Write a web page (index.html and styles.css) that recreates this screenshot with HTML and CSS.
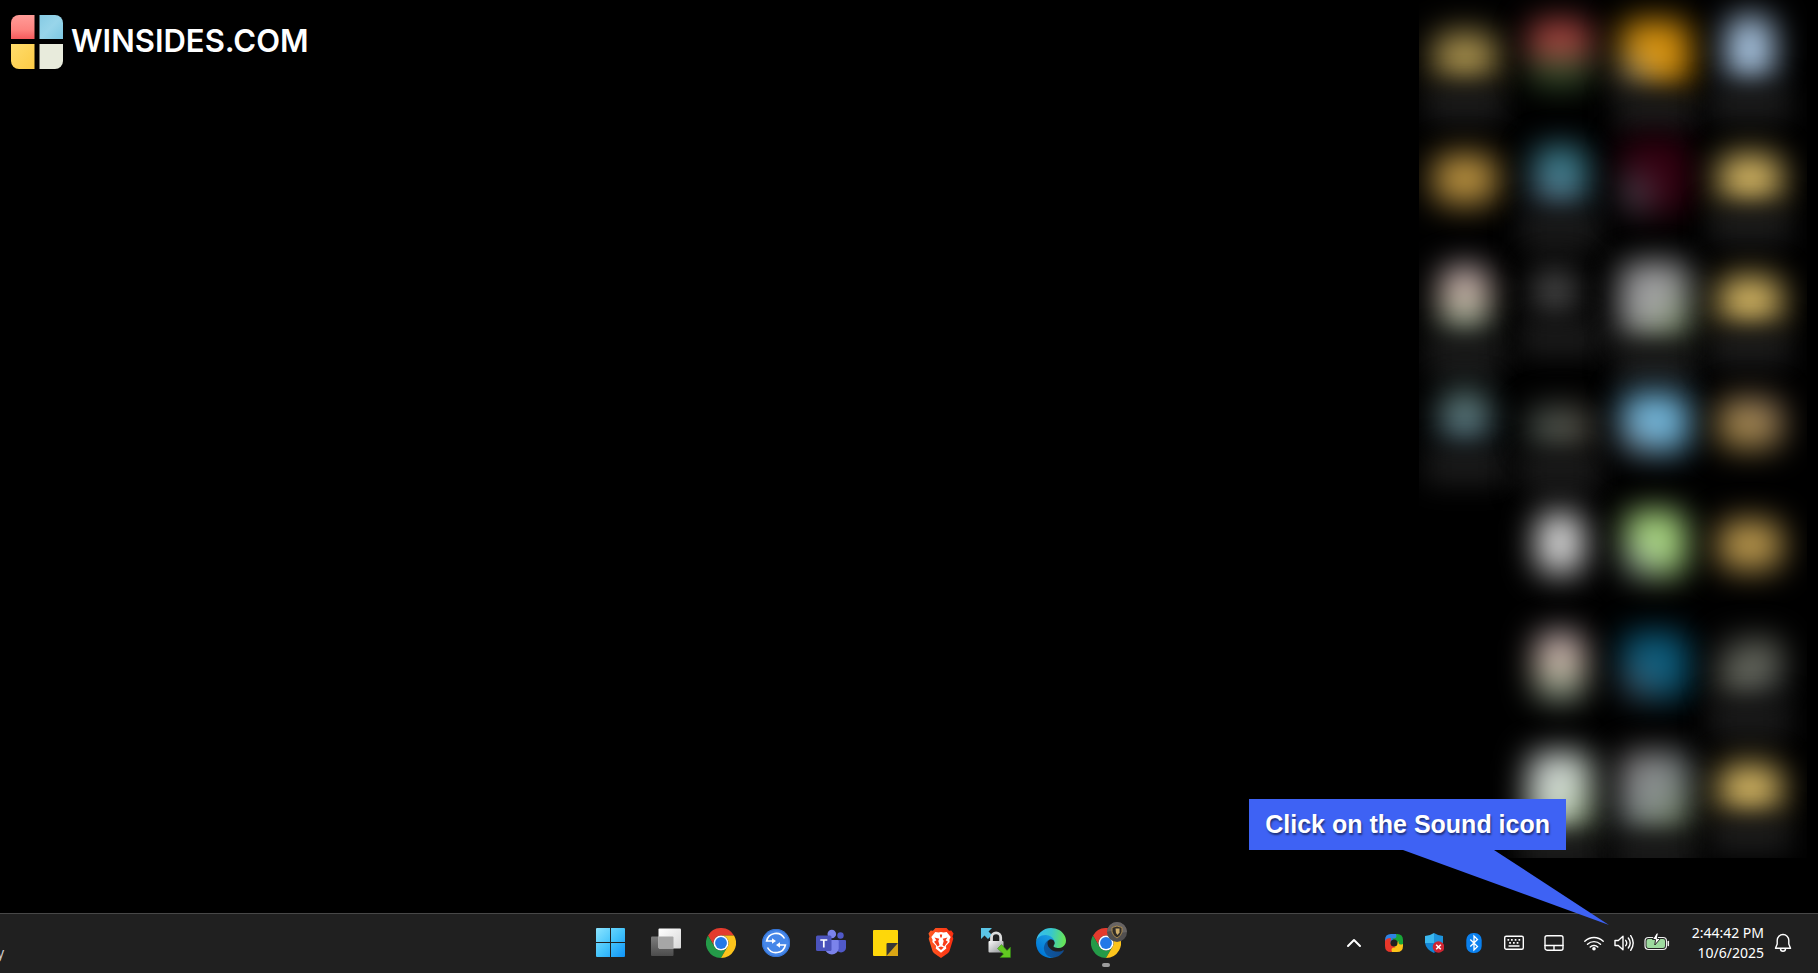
FILE: index.html
```html
<!DOCTYPE html>
<html lang="en">
<head>
<meta charset="utf-8">
<meta name="viewport" content="width=device-width, initial-scale=1">
<title>Winsides.com</title>
<link rel="stylesheet" href="styles.css">
</head>
<body>
<main class="desktop">
  <div class="brand">
    <svg class="brand-mark" viewBox="0 0 52 54" aria-hidden="true">
      <defs>
        <linearGradient id="lr" x1="0" y1="0" x2="0" y2="1"><stop offset="0" stop-color="#ff9c98"/><stop offset=".6" stop-color="#fd8480"/><stop offset="1" stop-color="#f65a5c"/></linearGradient>
        <linearGradient id="lb" x1="0" y1="0" x2="1" y2="1"><stop offset="0" stop-color="#86cbe4"/><stop offset=".5" stop-color="#98d5ea"/><stop offset="1" stop-color="#7cc7e2"/></linearGradient>
        <linearGradient id="ly" x1="0" y1="0" x2="1" y2="1"><stop offset="0" stop-color="#ffdc6c"/><stop offset="1" stop-color="#fccb45"/></linearGradient>
      </defs>
      <path fill="url(#lr)" d="M8 0H23.500V24H0V8A8 8 0 0 1 8 0Z"/>
      <path fill="url(#lb)" d="M28.500 0H44A8 8 0 0 1 52 8V24H28.500Z"/>
      <path fill="url(#ly)" d="M0 29H23.500V54H8A8 8 0 0 1 0 46Z"/>
      <path fill="#e8ebdc" d="M28.500 29H52V46A8 8 0 0 1 44 54H28.500Z"/>
    </svg>
    <span class="brand-name">WINSIDES.COM</span>
  </div>

  <div class="shortcuts" aria-hidden="true">
    <div class="column">
      <div class="shortcut olive labelled"></div>
      <div class="shortcut bronze"></div>
      <div class="shortcut sheet labelled"></div>
      <div class="shortcut slate labelled"></div>
    </div>
    <div class="column">
      <div class="shortcut chrome"></div>
      <div class="shortcut teal labelled"></div>
      <div class="shortcut dim labelled"></div>
      <div class="shortcut moss labelled"></div>
      <div class="shortcut page"></div>
      <div class="shortcut sheet"></div>
      <div class="shortcut mint labelled"></div>
    </div>
    <div class="column">
      <div class="shortcut orange labelled"></div>
      <div class="shortcut maroon"></div>
      <div class="shortcut silver labelled"></div>
      <div class="shortcut sky"></div>
      <div class="shortcut lime"></div>
      <div class="shortcut ocean"></div>
      <div class="shortcut pewter labelled"></div>
    </div>
    <div class="column">
      <div class="shortcut ice labelled"></div>
      <div class="shortcut folder labelled"></div>
      <div class="shortcut folder labelled"></div>
      <div class="shortcut tan"></div>
      <div class="shortcut amber"></div>
      <div class="shortcut smoke labelled"></div>
      <div class="shortcut folder labelled"></div>
    </div>
  </div>
</main>

<footer class="taskbar">
  <div class="widget">y</div>

  <nav class="apps" aria-label="Pinned apps">
    <button class="app" type="button" aria-label="Start">
      <svg viewBox="0 0 30 30"><defs><linearGradient id="win" x1="0" y1="0" x2="30" y2="30" gradientUnits="userSpaceOnUse"><stop offset="0" stop-color="#8be4ff"/><stop offset=".5" stop-color="#43c3fb"/><stop offset="1" stop-color="#0b90f8"/></linearGradient></defs>
      <path fill="url(#win)" d="M1 0H14V14H0V1a1 1 0 0 1 1-1ZM15 0h13a1 1 0 0 1 1 1V14H15ZM0 15H14v14H1a1 1 0 0 1-1-1ZM15 15h14v13a1 1 0 0 1-1 1H15Z"/></svg>
    </button>
    <button class="app" type="button" aria-label="Task view">
      <svg viewBox="0 0 30 30"><defs><linearGradient id="tv" x1="0" y1="0" x2="1" y2="1"><stop offset="0" stop-color="#fff"/><stop offset="1" stop-color="#d8d8d8"/></linearGradient><linearGradient id="tg" x1="0" y1="0" x2="0" y2="1"><stop offset="0" stop-color="#7c7c7c"/><stop offset="1" stop-color="#4c4c4c"/></linearGradient></defs>
      <rect y="8.500" width="22.500" height="19.500" rx="1" fill="url(#tg)"/><rect x="7.500" y=".5" width="22.500" height="20" rx="1" fill="url(#tv)"/><path fill="#a6a6a6" d="M7.500 8.500h14a1 1 0 0 1 1 1v11h-14a1 1 0 0 1-1-1Z"/></svg>
    </button>
    <button class="app" type="button" aria-label="Google Chrome">
      <svg viewBox="0 0 48 48"><g id="chrome"><path fill="#e33b2e" d="M3.200 12A24 24 0 0 1 44.800 12H24A12 12 0 0 0 13.600 30Z"/><path fill="#249a48" d="M3.200 12 13.600 30A12 12 0 0 0 34.400 30L24 48A24 24 0 0 1 3.200 12Z"/><path fill="#fcc41c" d="M24 48 34.400 30A12 12 0 0 0 24 12H44.800A24 24 0 0 1 24 48Z"/><circle cx="24" cy="24" r="12" fill="#fff"/><circle cx="24" cy="24" r="9.500" fill="#2378e8"/></g></svg>
    </button>
    <button class="app" type="button" aria-label="Remote sync">
      <svg viewBox="0 0 30 30"><circle cx="15" cy="15" r="14" fill="#4687e9"/><circle cx="15" cy="15" r="13.500" fill="none" stroke="#3272d6"/><g fill="none" stroke="#fff" stroke-width="1.600"><path d="M23.500 10.500A9.600 9.600 0 0 0 5.600 13H13"/><path d="M6.500 19.500A9.600 9.600 0 0 0 24.400 17H17"/></g><path fill="#fff" d="M11 10.300 15 13l-4 2.700ZM19 14.300 15 17l4 2.700Z"/></svg>
    </button>
    <button class="app" type="button" aria-label="Microsoft Teams">
      <svg viewBox="0 0 30 30"><circle cx="24.500" cy="7.500" r="3.200" fill="#5059c9"/><path fill="#5059c9" d="M20 12h9a1 1 0 0 1 1 1v6.500a5 5 0 0 1-10 0Z"/><circle cx="15.800" cy="6" r="4.300" fill="#7b83eb"/><path fill="#7b83eb" d="M9 12h12.500a1.200 1.200 0 0 1 1.200 1.200V20.500a6.900 6.900 0 0 1-13.700 0Z"/><rect y="7.500" width="15.500" height="15.500" rx="1.500" fill="#4b53bc"/><path d="M4.300 12h7M7.800 12v7.500" stroke="#fff" stroke-width="1.700"/></svg>
    </button>
    <button class="app" type="button" aria-label="Sticky Notes">
      <svg viewBox="0 0 30 30"><path fill="#fed70a" d="M3 2h23a1 1 0 0 1 1 1v25H3a1 1 0 0 1-1-1V3a1 1 0 0 1 1-1Z"/><path fill="#d9a514" d="M27 15v13H15.500Z"/><path fill="#363636" d="M27 15H16.500a1 1 0 0 0-1 1v12Z"/></svg>
    </button>
    <button class="app" type="button" aria-label="Brave">
      <svg viewBox="0 0 30 30"><defs><linearGradient id="br" x2="1"><stop offset="0" stop-color="#ff5a22"/><stop offset="1" stop-color="#fa2d10"/></linearGradient></defs><path fill="url(#br)" d="M9.500 0h11l2.500 2.800 2.300-.2 2.200 3-1 3 .8 2.200-3.800 12.200c-.8 2-3.500 3.500-8.500 7-5-3.500-7.700-5-8.500-7L2.700 10.800l.8-2.200-1-3 2.200-3 2.300.2Z"/><path fill="#fff" d="m9.300 4 3.200.6L15 4l2.500.6 3.200-.6 4 5-1.300 2.700.2 2.300-3.800 4 .5 2.600-5.300 4.200-5.300-4.200.5-2.600-3.800-4 .2-2.300L5.300 9Z"/><path fill="#f83c19" d="m8.500 9.500 4.800 1.200-1 2.300 1.200 4-1.700 1.500-3.700-4.700 2.200-1.500ZM21.500 9.500l-4.800 1.200 1 2.300-1.200 4 1.700 1.500 3.700-4.700-2.200-1.500ZM12.200 19.500 15 18.400l2.800 1.100L15 22ZM13.800 6.500h2.400l-.5 3h-1.400Z"/></svg>
    </button>
    <button class="app" type="button" aria-label="WinSCP">
      <svg viewBox="0 0 30 30"><defs><linearGradient id="lk" x2="1" y2="1"><stop offset="0" stop-color="#fafafa"/><stop offset="1" stop-color="#8e9194"/></linearGradient></defs><path fill="#5bc5e6" d="M0 0h11L7.500 3.500 11 7l-4 4-3.500-3.500L0 11Z"/><path fill="none" stroke="#dcdcdc" stroke-width="2.800" d="M10.500 14V9.500a4.600 4.600 0 0 1 9.200 0V14"/><rect x="7.500" y="13" width="15" height="11.500" rx="1" fill="url(#lk)"/><path fill="#62c921" stroke="#2f8a10" stroke-width=".5" d="m20.500 16.500 5.500 6 3.500-3.500v10.500H19l3.500-3.500-6-5.500Z"/></svg>
    </button>
    <button class="app" type="button" aria-label="Microsoft Edge">
      <svg viewBox="0 0 256 256"><defs><linearGradient id="e1" x1="60" y1="177" x2="241" y2="177" gradientUnits="userSpaceOnUse"><stop stop-color="#0c59a4"/><stop offset="1" stop-color="#114a8b"/></linearGradient><linearGradient id="e2" x1="157" y1="100" x2="46" y2="221" gradientUnits="userSpaceOnUse"><stop stop-color="#1b9de2"/><stop offset=".2" stop-color="#1595df"/><stop offset="1" stop-color="#0078d7"/></linearGradient><linearGradient id="e3" x1="10" y1="60" x2="240" y2="100" gradientUnits="userSpaceOnUse"><stop stop-color="#35bdf0"/><stop offset=".5" stop-color="#38c7cd"/><stop offset="1" stop-color="#65e45b"/></linearGradient></defs>
      <path fill="url(#e1)" d="M231 190.500c-3.400 1.800-6.900 3.400-10.500 4.700a101.300 101.300 0 0 1-35.400 6.300c-46.700 0-87.300-32.100-87.300-73.300A31.200 31.200 0 0 1 114 101c-42.200 1.800-53.100 45.800-53.100 71.600 0 72.900 67.200 80.300 81.700 80.300 7.800 0 19.600-2.300 26.600-4.500l1.300-.4a128.300 128.300 0 0 0 66.600-52.800 4 4 0 0 0-6.100-4.700z"/><path fill="url(#e2)" d="M105.700 241.400a79.200 79.200 0 0 1-22.700-21.300 80.700 80.700 0 0 1 29.500-120c3.100-1.500 8.500-4.100 15.600-4a32.400 32.400 0 0 1 25.700 13 31.900 31.900 0 0 1 6.300 18.700c0-.2 24.500-79.600-80-79.600-43.900 0-80 41.600-80 78.200a130.200 130.200 0 0 0 12.100 56 128 128 0 0 0 156.400 67.100 75.600 75.600 0 0 1-62.800-8z"/><path fill="url(#e3)" d="M152.300 148.900c-.8 1-3.300 2.500-3.300 5.700 0 2.600 1.700 5.100 4.700 7.300 14.400 10 41.500 8.700 41.600 8.700 10.700 0 21.100-2.900 30.300-8.300A61.400 61.400 0 0 0 256 109.400c.3-22.400-8-37.300-11.300-43.900C223.500 23.900 177.700 0 128 0A128 128 0 0 0 0 126.200c.5-36.500 36.800-66 80-66 3.500 0 23.500.3 42 10a72.600 72.600 0 0 1 30.900 29.300c6.100 10.600 7.200 24.100 7.200 29.500s-2.700 13.300-7.800 19.900z"/></svg>
    </button>
    <button class="app running" type="button" aria-label="Google Chrome, work profile">
      <svg viewBox="0 0 48 48"><use href="#chrome"/></svg>
      <svg class="badge" viewBox="0 0 20 20"><circle cx="10" cy="10" r="10" fill="#514f50"/><path fill="#686463" d="M0 10a10 10 0 0 1 20 0c-6 2-14-3-20 0Z"/><path fill="#302c28" stroke="#a88a50" stroke-width="1" d="M5 5.500q5-3 10 0v4.500q-1 4-5 6-4-2-5-6Z"/><path fill="#d0ae6a" d="M8.500 6.500h4v4l-2 2.500-1.500-2Z"/></svg>
    </button>
  </nav>

  <div class="tray">
    <button class="tray-item" type="button" aria-label="Show hidden icons">
      <svg width="20" height="20" viewBox="0 0 20 20"><path class="line thick" d="m4 13 6-6 6 6"/></svg>
    </button>
    <button class="tray-item" type="button" aria-label="Photo sync">
      <svg width="20" height="20" viewBox="0 0 20 20"><path fill="#2f82e4" d="M7 1h5q4 1 4 6L10 6.500 5 12 1 9V7q0-6 6-6Z"/><path fill="#18a538" d="M12 1h1q6 0 6 6v5q-1 3-6 3l.5-5L8 5.500Q14 6 12 1Z"/><path fill="#fcc419" d="M19 11v2q0 6-6 6H8q-3-1-3-6l5 .5L14.500 8Q14 13 19 11Z"/><path fill="#e8372a" d="M8 19H7q-6 0-6-6V8q1-3 6-3l-.5 5 5 4.500Q6 14 8 19Z"/><circle cx="10" cy="10" r="3.500" fill="#202020"/></svg>
    </button>
    <button class="tray-item" type="button" aria-label="Windows Security">
      <svg width="20" height="20" viewBox="0 0 20 20"><path fill="#3bb8ef" d="M10 0v10H1V3q5-.3 9-3Z"/><path fill="#1d93dc" d="M10 0q4 2.700 9 3v7h-9Z"/><path fill="#1384d4" d="M1 10h9v10Q2 16.500 1 10Z"/><path fill="#0b62ad" d="M10 10h9q-1 6.500-9 10Z"/><circle cx="14.500" cy="14" r="5.800" fill="#cf2431"/><path d="m12.200 11.700 4.600 4.600m0-4.600-4.600 4.600" stroke="#fff" stroke-width="1.500"/></svg>
    </button>
    <button class="tray-item" type="button" aria-label="Bluetooth">
      <svg width="20" height="20" viewBox="0 0 20 20"><rect x="2.300" width="15.400" height="20" rx="7" fill="#0a80ee"/><path fill="none" stroke="#fff" stroke-width="1.300" d="m6.300 6.500 7.200 7L10 17V3l3.500 3.500-7.200 7"/></svg>
    </button>
    <button class="tray-item" type="button" aria-label="Touch keyboard">
      <svg width="20" height="20" viewBox="0 0 20 20"><rect class="line" x=".7" y="3.200" width="18.600" height="13.100" rx="1.500"/><path fill="#fff" d="M3.500 6h1.700v1.700H3.500ZM7 6h1.700v1.700H7ZM10.700 6h1.700v1.700h-1.700ZM14.500 6h1.700v1.700h-1.700ZM5.200 9h1.700v1.700H5.200ZM9 9h1.700v1.700H9ZM12.700 9h1.700v1.700h-1.700ZM4.500 12.300h11v1.500h-11Z"/></svg>
    </button>
    <button class="tray-item" type="button" aria-label="Virtual touchpad">
      <svg width="20" height="20" viewBox="0 0 20 20"><rect class="line" x="1" y="2.700" width="18" height="14.500" rx="2"/><path class="line" d="M1 12.500h18M10 12.500v4.700"/></svg>
    </button>
    <button class="quick" type="button" aria-label="Network, sound and battery">
      <svg width="20" height="20" viewBox="0 0 20 20"><path class="line" d="M.8 8.300a13 13 0 0 1 18.400 0M3.500 11.300a9.200 9.200 0 0 1 13 0M6.200 14a5.400 5.400 0 0 1 7.600 0"/><circle cx="10" cy="15.700" r="1.800" fill="#fff"/></svg>
      <svg width="20" height="20" viewBox="0 0 20 20"><path class="line" d="M1 7.500h3.300L9 3.300v13.400l-4.700-4.200H1ZM11.700 7.300q2 2.700 0 5.400M14.300 5q3.800 5 0 10M16.700 2.700q5 7.300 0 14.600"/></svg>
      <svg width="26" height="20" viewBox="0 0 26 20"><rect x="1" y="4.500" width="21.500" height="12" rx="3.500" fill="none" stroke="#eee" stroke-width="1.200"/><rect x="2.500" y="6" width="18.500" height="9" rx="2" fill="#9edb9f"/><path d="M24.300 8.500v4" stroke="#eee" stroke-width="1.500" stroke-linecap="round"/><path fill="#fff" stroke="#202020" stroke-width="1" d="m12.500 0-4 6.500h3L10.800 12l5.700-6.500h-3.300L14.500 0Z"/></svg>
    </button>
    <button class="clock" type="button"><time>2:44:42 PM</time><time>10/6/2025</time></button>
    <button class="bell" type="button" aria-label="Notifications">
      <svg width="18" height="20" viewBox="0 0 18 20"><path class="line" d="M1.500 15.300 3.200 11V7.300a5.800 5.800 0 0 1 11.600 0V11l1.700 4.300ZM6.500 15.800a2.500 2.500 0 0 0 5 0"/></svg>
    </button>
  </div>
</footer>

<aside class="callout">Click on the Sound icon
  <svg class="callout-tail" viewBox="0 0 206 75" aria-hidden="true"><path fill="#3e62f4" d="M0 0H91L206 75Z"/></svg>
</aside>
</body>
</html>
```

FILE: styles.css
```css
* { box-sizing: border-box; }

body {
  position: relative;
  display: flex;
  flex-direction: column;
  min-height: 100vh;
  margin: 0;
  background: #000;
  color: #fff;
  font-family: "Noto Sans", "Open Sans", sans-serif;
  overflow-x: hidden;
}

button {
  margin: 0;
  padding: 0;
  border: 0;
  background: none;
  color: inherit;
  font: inherit;
}

svg { display: block; }

.desktop {
  flex: 1;
  display: flex;
  justify-content: space-between;
  align-items: flex-start;
  padding-right: 11px;
}

.brand {
  display: flex;
  align-items: flex-start;
  gap: 8px;
  padding: 15px 0 0 11px;
}

.brand-mark { width: 52px; height: 54px; }

.brand-name {
  font: 600 31px/52px Inter, "Open Sans", sans-serif;
}

/* Blurred desktop shortcuts */
.shortcuts {
  display: flex;
  width: 388px;
  padding-bottom: 4px;
  overflow: hidden;
}

.column { width: 95px; flex: none; }

.shortcut {
  display: flex;
  flex-direction: column;
  align-items: center;
  height: 122px;
  padding: 32px 4px 0 0;
}

.shortcut::before {
  content: "";
  flex: none;
  width: 64px;
  height: 50px;
  border-radius: 16px;
  background: #b99c50;
  filter: blur(16px);
}

.labelled::after {
  content: "";
  flex: none;
  width: 80px;
  height: 34px;
  margin-top: 6px;
  background: #1c1c1c;
  filter: blur(14px);
}

.olive::before { background: #a58e4c; }
.bronze::before { background: #b8903f; }
.folder::before { background: #d2b462; }
.tan::before { background: linear-gradient(30deg, #b09044, #947a62); }
.amber::before { background: #b8964c; }
.chrome::before { height: 66px; margin-top: -12px; background: linear-gradient(#a84440 0 50%, #36502c 60%); }
.orange::before { width: 70px; height: 68px; margin-top: -12px; background: radial-gradient(circle at 15% 85%, #8a9090, transparent 40%), #d8920c; }
.ice::before { width: 48px; height: 66px; margin-top: -16px; background: #a8c4e0; }
.teal::before { width: 54px; height: 62px; margin-top: -8px; background: linear-gradient(20deg, #587084 20%, #3c8090 60%); }
.maroon::before { width: 68px; height: 76px; margin-top: -16px; background: radial-gradient(circle at 15% 75%, #585864, transparent 40%), #340010; }
.sheet::before { width: 50px; height: 68px; margin-top: -10px; background: linear-gradient(#c0b0b8, #d0b4a4 45%, #a6b298 70%, #7c8c7c); }
.dim::before { width: 44px; height: 48px; margin-top: -8px; margin-right: 10px; background: #484848; }
.silver::before { width: 70px; height: 78px; margin-top: -14px; background: linear-gradient(135deg, #a0a0a2 50%, #8ca078 85%); }
.slate::before { width: 50px; height: 54px; margin-top: -8px; background: linear-gradient(#5e7a74, #547484); }
.moss::before { height: 44px; margin-top: 8px; background: linear-gradient(90deg, #48544f, #544e44); }
.sky::before { width: 68px; height: 60px; margin-top: -6px; background: radial-gradient(circle at 15% 90%, #8898a8, transparent 40%), #70b4d8; }
.page::before { width: 48px; height: 62px; margin-top: -8px; background: #d4d4d4; }
.lime::before { width: 62px; height: 66px; margin-top: -10px; background: radial-gradient(circle at 15% 85%, #98a4a8, transparent 45%), #a8d67e; }
.ocean::before { width: 66px; height: 66px; margin-top: -10px; background: radial-gradient(circle at 15% 85%, #506070, transparent 45%), #0b5c7c; }
.smoke::before { height: 60px; margin-top: -4px; background: linear-gradient(140deg, #242626, #6e7064 50%, #34383c); }
.mint::before { width: 64px; height: 80px; margin-top: -12px; background: linear-gradient(135deg, #cccfd2, #ccd8cc 55%, #9cb880); }
.pewter::before { width: 70px; height: 80px; margin-top: -12px; background: linear-gradient(135deg, #948c8c, #848c8e 50%, #7c9064); }

/* Taskbar */
.taskbar {
  display: grid;
  grid-template-columns: 1fr auto 1fr;
  align-items: center;
  height: 60px;
  padding-bottom: 1px;
  border-top: 1px solid #484848;
  background: #202020;
}

.widget {
  margin: 20px 0 0 -3px;
  color: #ccc;
  font-size: 14px;
  line-height: 20px;
}

.apps {
  display: flex;
  margin-right: 102px;
}

.app {
  position: relative;
  display: grid;
  place-items: center;
  width: 55px;
  height: 58px;
}

.app svg { width: 30px; height: 30px; }

.app .badge {
  position: absolute;
  top: 8px;
  right: 6px;
  width: 20px;
  height: 20px;
}

.running::after {
  content: "";
  position: absolute;
  bottom: 5px;
  left: 24px;
  width: 8px;
  height: 4px;
  border-radius: 2px;
  background: #9c9c9c;
}

.tray {
  display: flex;
  justify-content: flex-end;
  align-items: center;
  padding-right: 26px;
}

.tray-item {
  display: grid;
  place-items: center;
  width: 40px;
  height: 40px;
}

.line {
  fill: none;
  stroke: #fff;
  stroke-width: 1.4;
  stroke-linejoin: round;
  stroke-linecap: round;
}

.thick { stroke-width: 2; }

.quick {
  display: flex;
  gap: 10px;
  padding: 0 22px 0 10px;
}

.clock {
  display: flex;
  flex-direction: column;
  align-items: flex-end;
  font-size: 14px;
  line-height: 20px;
}

.bell { margin-left: 10px; }

/* Callout pointing at the sound icon */
.callout {
  position: absolute;
  right: 252px;
  bottom: 123px;
  padding: 0 16px;
  background: #3e62f4;
  font: 700 25px/51px "Liberation Sans", Arial, sans-serif;
  text-shadow: 1px 2px 2px rgba(0, 0, 0, .5);
  white-space: nowrap;
}

.callout-tail {
  position: absolute;
  top: 100%;
  right: -43px;
  width: 206px;
  height: 75px;
}
```
